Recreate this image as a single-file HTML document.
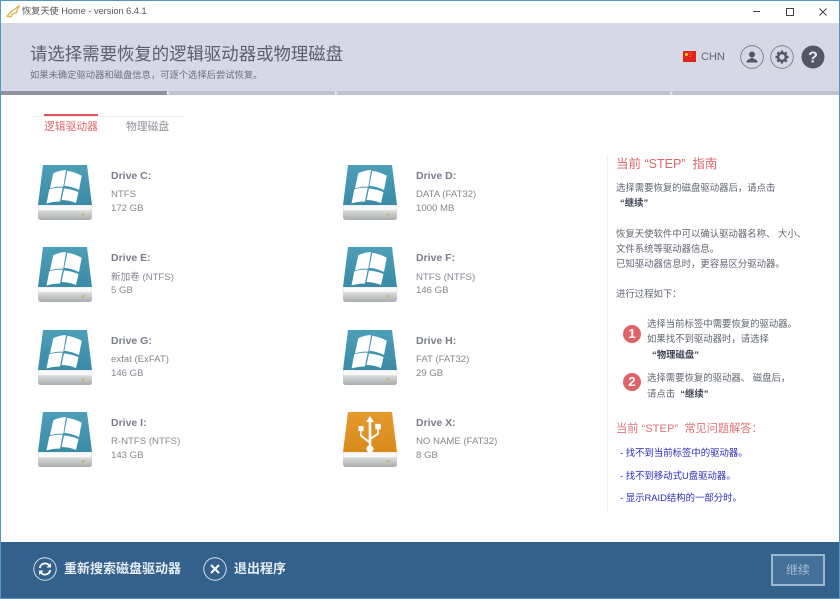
<!DOCTYPE html>
<html lang="zh">
<head>
<meta charset="utf-8">
<title>恢复天使 Home</title>
<style>
html,body{margin:0;padding:0;background:#fff}
body{width:840px;height:599px;position:relative;overflow:hidden;font-family:"Liberation Sans","Noto Sans CJK SC",sans-serif;color:#6b6f7a}
.a{position:absolute;white-space:nowrap}
.frame{position:absolute;left:0;top:0;width:838px;height:597px;border:1px solid #4e97c6;z-index:9;pointer-events:none}
.name{font-size:10.5px;font-weight:bold;color:#7a7d8a;line-height:14px}
.sub{font-size:9.6px;color:#85878f;line-height:14px}
.g{font-size:9.4px;color:#5f6470;line-height:14px}
.b{font-weight:bold;color:#3c4252}
.q{font-size:9.4px;color:#2a2ac0;line-height:14px}
.num{width:18px;height:18px;border-radius:50%;background:#e0636a;color:#fff;font-size:13px;font-weight:bold;text-align:center;line-height:18px}
.ft{font-size:13px;font-weight:bold;color:#e6ecf2;line-height:16px}
.sep{position:absolute;top:91px;width:3px;height:4px;background:#eceef4;clip-path:polygon(0 0,100% 50%,0 100%)}
</style>
</head>
<body>
<svg width="0" height="0" style="position:absolute">
<defs>
<linearGradient id="gb" x1="0" y1="0" x2="0" y2="1"><stop offset="0" stop-color="#4d9fb8"/><stop offset="1" stop-color="#3a8ba6"/></linearGradient>
<linearGradient id="go" x1="0" y1="0" x2="0" y2="1"><stop offset="0" stop-color="#e59a2e"/><stop offset="1" stop-color="#d98a1c"/></linearGradient>
<linearGradient id="gg" x1="0" y1="0" x2="0" y2="1"><stop offset="0" stop-color="#dcdede"/><stop offset="1" stop-color="#a9adae"/></linearGradient>
<symbol id="base" viewBox="0 0 56 58">
<path d="M1 46h54v7q0 3-3 3H4q-3 0-3-3z" fill="url(#gg)"/>
<path d="M1 41h54v5.500H1z" fill="#f8f8f8" stroke="#d8dada" stroke-width=".5"/>
<circle cx="46" cy="50.500" r="1.500" fill="#c9b27a"/>
</symbol>
<symbol id="win" viewBox="0 0 56 58">
<use href="#base" width="56" height="58"/>
<path d="M6 1h44l5 40H1z" fill="url(#gb)"/>
<path d="M16.300 9.300Q23 6 29 6l-2.700 16.700q-6-.5-13.300 1.600zM30.300 6.700q7 1 14.400 5l-2.700 14.300q-7-3.500-14.700-4.300zM12.300 25.300q7-2 13.400-1.600L23 37.500q-7 0-13.500 2zM27 24.500q7 .5 14.500 3.500L39 39q-7-3-14.500-3z" fill="#fff"/>
</symbol>
<symbol id="usb" viewBox="0 0 56 58">
<use href="#base" width="56" height="58"/>
<path d="M6 1h44l5 40H1z" fill="url(#go)"/>
<path d="M28 5l-4 6h2.700v18.500l-7-5.500v-4h1.800v-5h-5v5h1.600v5.200l8.600 6.800v2.600a3.600 3.600 0 1 0 2.600 0v-6.200l7.500-5v-5h2v-5.500h-5.500v5.500h1.800v3.800l-5.800 3.800V11H32z" fill="#fff"/>
</symbol>
</defs>
</svg>

<div class="frame"></div>

<!-- title bar -->
<svg class="a" style="left:6px;top:5px" width="14" height="13" viewBox="0 0 14 13"><path d="M1 11L6 6l7-5-3 7-4 1-1 3z" fill="none" stroke="#d9b24a" stroke-width="1.300"/><path d="M1 12l3-4" stroke="#e4c060" stroke-width="1.500"/></svg>
<div class="a" style="left:22px;top:5px;font-size:9.200px;line-height:13px;color:#555">恢复天使 Home - version 6.4.1</div>
<div class="a" style="left:753px;top:11px;width:7px;height:1px;background:#444"></div>
<div class="a" style="left:786px;top:8px;width:6px;height:6px;border:1px solid #444"></div>
<svg class="a" style="left:819px;top:8px" width="8" height="8" viewBox="0 0 8 8"><path d="M.5.500l7 7M7.500.500l-7 7" stroke="#444" stroke-width="1"/></svg>

<!-- header -->
<div class="a" style="left:1px;top:23px;width:838px;height:68px;background:#d6d9e5"></div>
<div class="a" style="left:30px;top:42px;font-size:17.400px;line-height:24px;color:#5a5e6e">请选择需要恢复的逻辑驱动器或物理磁盘</div>
<div class="a" style="left:30px;top:68px;font-size:9.300px;line-height:14px;color:#6c7080">如果未确定驱动器和磁盘信息，可逐个选择后尝试恢复。</div>
<div class="a" style="left:1px;top:91px;width:838px;height:4px;background:#bfc1cf"></div>
<div class="a" style="left:1px;top:91px;width:166px;height:4px;background:#8f919f"></div>
<div class="sep" style="left:167px"></div>
<div class="sep" style="left:335px"></div>
<div class="sep" style="left:670px"></div>

<!-- flag -->
<svg class="a" style="left:683px;top:51px" width="13" height="11" viewBox="0 0 13 11"><rect width="13" height="11" fill="#e2231a"/><circle cx="3.500" cy="3.500" r="1.500" fill="#f6d02a"/><circle cx="7" cy="1.800" r=".5" fill="#f6d02a"/><circle cx="8" cy="3.500" r=".5" fill="#f6d02a"/><circle cx="7" cy="5.500" r=".5" fill="#f6d02a"/></svg>
<div class="a" style="left:701px;top:50px;font-size:11px;line-height:14px;color:#5e6272">CHN</div>

<!-- header icons -->
<svg class="a" style="left:740px;top:45px" width="24" height="24" viewBox="0 0 24 24"><circle cx="12" cy="12" r="11.300" fill="none" stroke="#70737f" stroke-width=".8"/><circle cx="12" cy="9.500" r="3" fill="#525666"/><path d="M6.500 17.500q0-3 3.500-3.500l.8-1h2.400l.8 1q3.500.5 3.500 3.500z" fill="#525666"/></svg>
<svg class="a" style="left:770px;top:45px" width="24" height="24" viewBox="0 0 24 24"><circle cx="12" cy="12" r="11.300" fill="none" stroke="#70737f" stroke-width=".8"/><circle cx="12" cy="12" r="3.900" fill="none" stroke="#525666" stroke-width="2.400"/><path d="M12 5.500v2.500M12 16v2.500M5.500 12H8M16 12h2.500M7.400 7.400l1.800 1.800M14.800 14.800l1.800 1.800M16.600 7.400l-1.800 1.800M9.200 14.800l-1.800 1.800" stroke="#525666" stroke-width="2.400"/></svg>
<svg class="a" style="left:801px;top:45px" width="24" height="24" viewBox="0 0 24 24"><circle cx="12" cy="12" r="11.500" fill="#525666"/><text x="12" y="17.500" text-anchor="middle" font-family="Liberation Sans" font-weight="bold" font-size="16" fill="#e8e9ef">?</text></svg>

<!-- tabs -->
<div class="a" style="left:32px;top:116px;width:152px;height:1px;background:#eeeeee"></div>
<div class="a" style="left:44px;top:114px;width:54px;height:2px;background:#e0565c"></div>
<div class="a" style="left:44px;top:120px;font-size:10.800px;line-height:15px;color:#dc6a6e">逻辑驱动器</div>
<div class="a" style="left:126px;top:120px;font-size:10.800px;line-height:15px;color:#8d8f96">物理磁盘</div>

<!-- drives col 1 -->
<svg class="a" style="left:37px;top:164px" width="56" height="58"><use href="#win"/></svg>
<div class="a name" style="left:111px;top:169px">Drive C:</div>
<div class="a sub" style="left:111px;top:188px">NTFS</div>
<div class="a sub" style="left:111px;top:202px">172 GB</div>

<svg class="a" style="left:37px;top:246px" width="56" height="58"><use href="#win"/></svg>
<div class="a name" style="left:111px;top:251px">Drive E:</div>
<div class="a sub" style="left:111px;top:271px">新加卷 (NTFS)</div>
<div class="a sub" style="left:111px;top:284px">5 GB</div>

<svg class="a" style="left:37px;top:329px" width="56" height="58"><use href="#win"/></svg>
<div class="a name" style="left:111px;top:334px">Drive G:</div>
<div class="a sub" style="left:111px;top:353px">exfat (ExFAT)</div>
<div class="a sub" style="left:111px;top:367px">146 GB</div>

<svg class="a" style="left:37px;top:411px" width="56" height="58"><use href="#win"/></svg>
<div class="a name" style="left:111px;top:416px">Drive I:</div>
<div class="a sub" style="left:111px;top:435px">R-NTFS (NTFS)</div>
<div class="a sub" style="left:111px;top:449px">143 GB</div>

<!-- drives col 2 -->
<svg class="a" style="left:342px;top:164px" width="56" height="58"><use href="#win"/></svg>
<div class="a name" style="left:416px;top:169px">Drive D:</div>
<div class="a sub" style="left:416px;top:188px">DATA (FAT32)</div>
<div class="a sub" style="left:416px;top:202px">1000 MB</div>

<svg class="a" style="left:342px;top:246px" width="56" height="58"><use href="#win"/></svg>
<div class="a name" style="left:416px;top:251px">Drive F:</div>
<div class="a sub" style="left:416px;top:271px">NTFS (NTFS)</div>
<div class="a sub" style="left:416px;top:284px">146 GB</div>

<svg class="a" style="left:342px;top:329px" width="56" height="58"><use href="#win"/></svg>
<div class="a name" style="left:416px;top:334px">Drive H:</div>
<div class="a sub" style="left:416px;top:353px">FAT (FAT32)</div>
<div class="a sub" style="left:416px;top:367px">29 GB</div>

<svg class="a" style="left:342px;top:411px" width="56" height="58"><use href="#usb"/></svg>
<div class="a name" style="left:416px;top:416px">Drive X:</div>
<div class="a sub" style="left:416px;top:435px">NO NAME (FAT32)</div>
<div class="a sub" style="left:416px;top:449px">8 GB</div>

<!-- right panel -->
<div class="a" style="left:607px;top:155px;width:1px;height:357px;background:#eeeeee"></div>
<div class="a" style="left:616px;top:156px;font-size:12.500px;line-height:16px;color:#d9686c">当前&nbsp;“STEP”&nbsp;&nbsp;指南</div>
<div class="a g" style="left:616px;top:181px">选择需要恢复的磁盘驱动器后，请点击</div>
<div class="a g b" style="left:620px;top:196px">“继续”</div>
<div class="a g" style="left:616px;top:227px">恢复天使软件中可以确认驱动器名称、 大小、</div>
<div class="a g" style="left:616px;top:242px">文件系统等驱动器信息。</div>
<div class="a g" style="left:616px;top:257px">已知驱动器信息时，更容易区分驱动器。</div>
<div class="a g" style="left:616px;top:287px">进行过程如下：</div>

<div class="a num" style="left:623px;top:325px">1</div>
<div class="a g" style="left:647px;top:317px">选择当前标签中需要恢复的驱动器。</div>
<div class="a g" style="left:647px;top:332px">如果找不到驱动器时，请选择</div>
<div class="a g b" style="left:652px;top:348px">“物理磁盘”</div>
<div class="a num" style="left:623px;top:373px">2</div>
<div class="a g" style="left:647px;top:371px">选择需要恢复的驱动器、 磁盘后，</div>
<div class="a g" style="left:647px;top:387px">请点击 &nbsp;<span class="b">“继续”</span></div>

<div class="a" style="left:616px;top:422px;font-size:11.200px;line-height:15px;color:#dc7478">当前&nbsp;“STEP”&nbsp;&nbsp;常见问题解答：</div>
<div class="a q" style="left:620px;top:446px">- 找不到当前标签中的驱动器。</div>
<div class="a q" style="left:620px;top:469px">- 找不到移动式U盘驱动器。</div>
<div class="a q" style="left:620px;top:491px">- 显示RAID结构的一部分时。</div>

<!-- footer -->
<div class="a" style="left:1px;top:542px;width:838px;height:56px;background:#34618c"></div>
<svg class="a" style="left:33px;top:557px" width="24" height="24" viewBox="0 0 24 24"><circle cx="12" cy="12" r="11.200" fill="none" stroke="#d5e0ea" stroke-width="1"/><path d="M6.800 11a5.300 5.300 0 0 1 9-3l1.400 1.300M17.200 13a5.300 5.300 0 0 1-9 3l-1.400-1.300" fill="none" stroke="#fff" stroke-width="1.800"/><path d="M18 6v4.500h-4.500zM6 18v-4.500h4.500z" fill="#fff"/></svg>
<div class="a ft" style="left:64px;top:561px">重新搜索磁盘驱动器</div>
<svg class="a" style="left:203px;top:557px" width="24" height="24" viewBox="0 0 24 24"><circle cx="12" cy="12" r="11.200" fill="none" stroke="#d5e0ea" stroke-width="1"/><path d="M8 8l8 8M16 8l-8 8" stroke="#fff" stroke-width="2"/></svg>
<div class="a ft" style="left:234px;top:561px">退出程序</div>
<div class="a" style="left:771px;top:554px;width:50px;height:28px;border:2px solid #9cb8d0;background:#44709a;text-align:center;font-size:12px;line-height:28px;color:#a9bfd2">继续</div>
</body>
</html>
